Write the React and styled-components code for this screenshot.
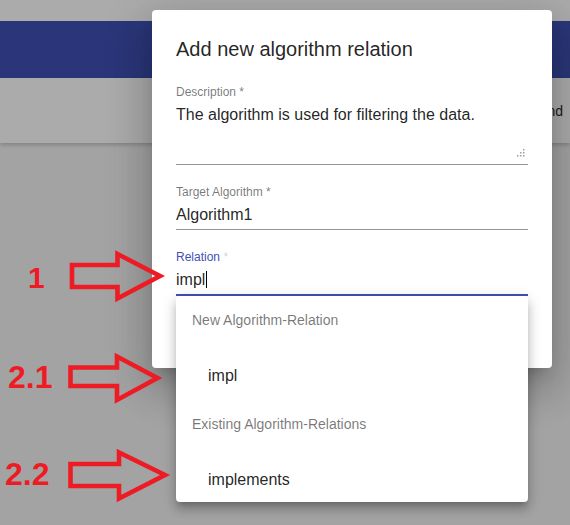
import React from 'react';
import styled, { createGlobalStyle } from 'styled-components';

const GlobalStyle = createGlobalStyle`
  html, body {
    margin: 0;
    padding: 0;
  }
  body {
    font-family: "Liberation Sans", Arial, sans-serif;
    background: #f4f4f4;
  }
`;

const Page = styled.div`
  position: relative;
  width: 570px;
  height: 525px;
  overflow: hidden;
  background: #f4f4f4;
  display: flex;
  flex-direction: column;
`;

const TopStrip = styled.div`
  height: 21px;
  background: #fff;
`;

const AppBar = styled.header`
  height: 57px;
  background: #3f51b5;
`;

const Toolbar = styled.div`
  height: 65px;
  background: #fff;
  display: flex;
  align-items: center;
  justify-content: flex-end;
  padding-right: 7px;
  box-shadow: 0 2px 4px rgba(0, 0, 0, 0.2);
  font-size: 14px;
  color: rgba(0, 0, 0, 0.87);
`;

const Backdrop = styled.div`
  position: absolute;
  inset: 0;
  background: rgba(0, 0, 0, 0.33);
  padding: 10px 0 0 152px;
`;

const Dialog = styled.div`
  width: 400px;
  height: 358px;
  box-sizing: border-box;
  background: #fff;
  border-radius: 4px;
  padding: 23px 24px 0;
  display: flex;
  flex-direction: column;
  box-shadow: 0px 11px 15px -7px rgba(0, 0, 0, 0.2),
    0px 24px 38px 3px rgba(0, 0, 0, 0.14),
    0px 9px 46px 8px rgba(0, 0, 0, 0.12);
`;

const Title = styled.h2`
  margin: 0 0 20px;
  font-size: 20px;
  font-weight: 400;
  line-height: 32px;
  color: rgba(0, 0, 0, 0.87);
`;

const Field = styled.div`
  position: relative;
  display: flex;
  flex-direction: column;
  & + & {
    margin-top: 20px;
  }
`;

const Label = styled.label`
  font-size: 12px;
  line-height: 14px;
  color: ${p => (p.$focused ? '#3f51b5' : 'rgba(0, 0, 0, 0.54)')};
`;

const Star = styled.span`
  color: ${p => (p.$focused ? 'rgba(0, 0, 0, 0.2)' : 'inherit')};
`;

const Value = styled.div`
  position: relative;
  margin-top: 6px;
  font-size: 16px;
  line-height: 19px;
  min-height: ${p => (p.$rows || 1) * 18}px;
  padding-bottom: 5px;
  color: rgba(0, 0, 0, 0.87);
  border-bottom: ${p => (p.$focused ? '2px solid #3f51b5' : '1px solid rgba(0, 0, 0, 0.42)')};
`;

const Caret = styled.span`
  display: inline-block;
  width: 1px;
  height: 17px;
  margin-left: 1px;
  vertical-align: -3px;
  background: #000;
`;

const Grip = styled.svg`
  position: absolute;
  right: 3px;
  bottom: 7px;
`;

const Popup = styled.div`
  position: absolute;
  top: 100%;
  left: 0;
  right: 0;
  height: 206px;
  box-sizing: border-box;
  padding-top: 8px;
  overflow: hidden;
  background: #fff;
  border-radius: 4px;
  z-index: 2;
  box-shadow: 0px 5px 5px -3px rgba(0, 0, 0, 0.2),
    0px 8px 10px 1px rgba(0, 0, 0, 0.14),
    0px 3px 14px 2px rgba(0, 0, 0, 0.12);
`;

const GroupHeader = styled.div`
  padding-left: 16px;
  font-size: 14px;
  line-height: 32px;
  color: rgba(0, 0, 0, 0.54);
`;

const Option = styled.div`
  padding: 24px 0 16px 32px;
  font-size: 16px;
  line-height: 32px;
  color: rgba(0, 0, 0, 0.87);
`;

const Overlay = styled.div`
  position: absolute;
  inset: 0;
  pointer-events: none;
  z-index: 10;
`;

const Num = styled.span`
  position: absolute;
  left: ${p => p.$x}px;
  top: ${p => p.$y}px;
  font-weight: 700;
  font-size: ${p => p.$size}px;
  line-height: 1;
  color: #ed1c24;
`;

const Arrows = styled.svg`
  position: absolute;
  inset: 0;
`;

const arrows = [
  '72,265 117.5,265 117.5,254 160,276 117.5,298.5 117.5,287 72,287',
  '70.5,367.5 117,367.5 117,356.5 157.5,378 117,400 117,386 70.5,386',
  '70.5,464 119,464 119,452.5 165,475 119,498.5 119,486 70.5,486',
];

function ResizeGrip() {
  const dots = [
    [6, 0],
    [3, 3], [6, 3],
    [0, 6], [3, 6], [6, 6],
  ];
  return (
    <Grip width="8" height="8" viewBox="0 0 8 8">
      {dots.map(([x, y]) => (
        <rect key={`${x}-${y}`} x={x} y={y} width="1.5" height="1.5" fill="#9e9e9e" />
      ))}
    </Grip>
  );
}

export default function App() {
  return (
    <>
      <GlobalStyle />
      <Page>
        <TopStrip />
        <AppBar />
        <Toolbar>Expand</Toolbar>

        <Backdrop>
          <Dialog>
            <Title>Add new algorithm relation</Title>

            <Field>
              <Label>Description <Star>*</Star></Label>
              <Value $rows={3}>
                The algorithm is used for filtering the data.
                <ResizeGrip />
              </Value>
            </Field>

            <Field>
              <Label>Target Algorithm <Star>*</Star></Label>
              <Value>Algorithm1</Value>
            </Field>

            <Field>
              <Label $focused>Relation <Star $focused>*</Star></Label>
              <Value $focused>impl<Caret /></Value>
              <Popup>
                <GroupHeader>New Algorithm-Relation</GroupHeader>
                <Option>impl</Option>
                <GroupHeader>Existing Algorithm-Relations</GroupHeader>
                <Option>implements</Option>
              </Popup>
            </Field>
          </Dialog>
        </Backdrop>

        <Overlay>
          <Num $x={28} $y={263} $size={30}>1</Num>
          <Num $x={8} $y={361} $size={32}>2.1</Num>
          <Num $x={5} $y={458} $size={32}>2.2</Num>
          <Arrows width="570" height="525" viewBox="0 0 570 525">
            {arrows.map(pts => (
              <polygon
                key={pts}
                points={pts}
                fill="none"
                stroke="#ed1c24"
                strokeWidth="4.6"
                strokeLinejoin="miter"
                strokeMiterlimit="10"
              />
            ))}
          </Arrows>
        </Overlay>
      </Page>
    </>
  );
}
